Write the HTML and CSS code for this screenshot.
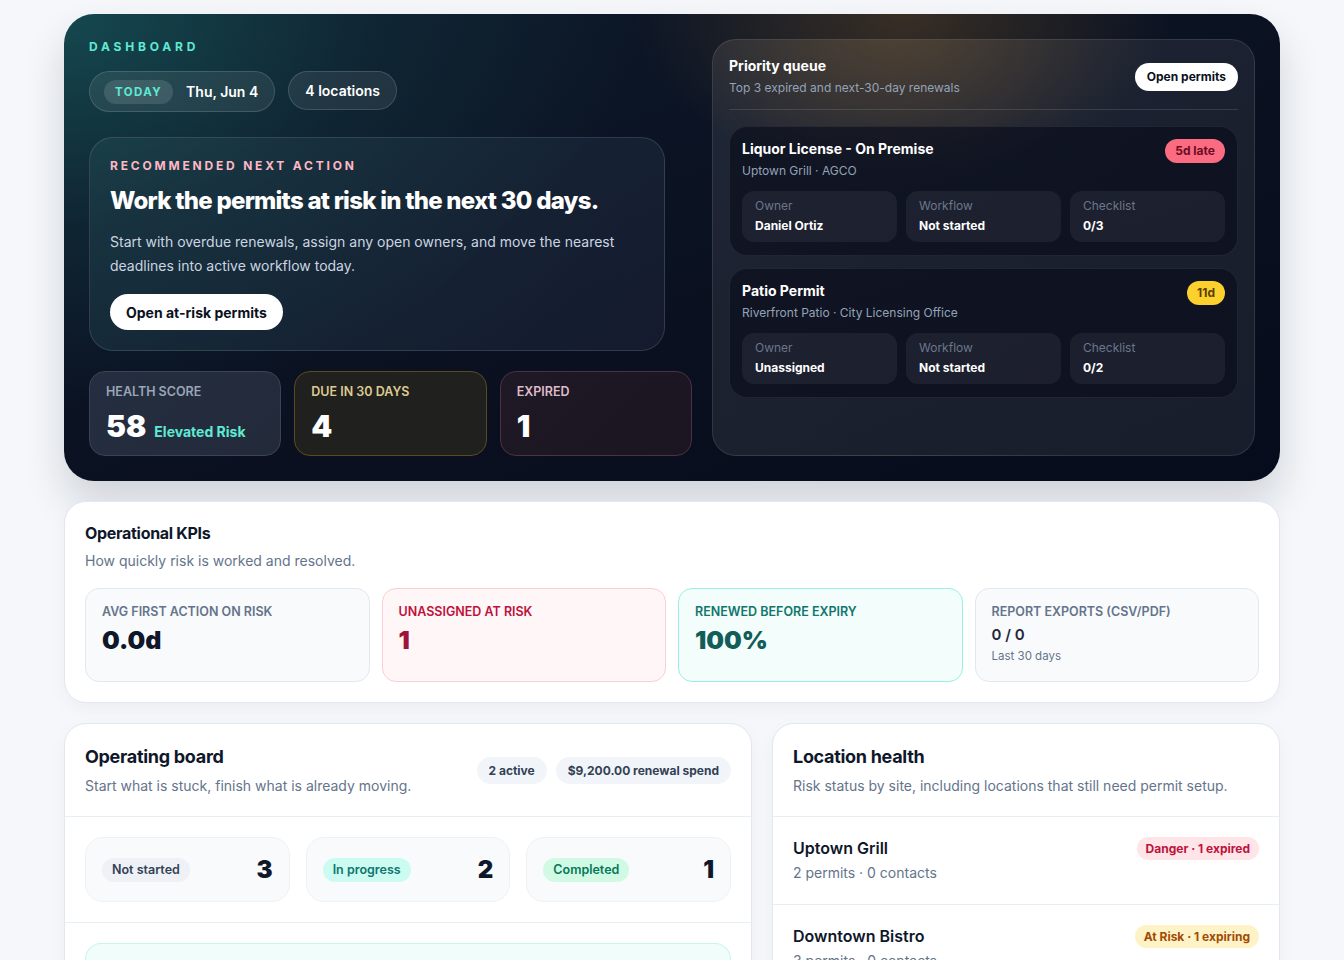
FILE: index.html
```html
<!DOCTYPE html>
<html lang="en">
<head>
    <meta charset="UTF-8">
    <meta name="viewport" content="width=device-width, initial-scale=1.0">
    <title>Permit Dashboard</title>
    <link rel="stylesheet" href="styles.css">
</head>
<body>
    <div class="page">

        <!-- Hero: summary + priority queue -->
        <section class="hero">
            <div class="hero-main">
                <div class="eyebrow">Dashboard</div>
                <div class="hero-pills">
                    <div class="pill pill-date"><span class="pill-tag">Today</span>Thu, Jun 4</div>
                    <div class="pill">4 locations</div>
                </div>

                <div class="next-action">
                    <div class="next-label">Recommended next action</div>
                    <h1>Work the permits at risk in the next 30 days.</h1>
                    <p>Start with overdue renewals, assign any open owners, and move the nearest deadlines into active workflow today.</p>
                    <button class="btn-light">Open at-risk permits</button>
                </div>

                <div class="stats">
                    <div class="stat stat-health">
                        <div class="stat-label">Health score</div>
                        <div class="stat-value">58 <span class="stat-note">Elevated Risk</span></div>
                    </div>
                    <div class="stat stat-due">
                        <div class="stat-label">Due in 30 days</div>
                        <div class="stat-value">4</div>
                    </div>
                    <div class="stat stat-expired">
                        <div class="stat-label">Expired</div>
                        <div class="stat-value">1</div>
                    </div>
                </div>
            </div>

            <div class="queue">
                <div class="queue-head">
                    <div>
                        <div class="queue-title">Priority queue</div>
                        <div class="queue-sub">Top 3 expired and next-30-day renewals</div>
                    </div>
                    <button class="btn-light btn-small">Open permits</button>
                </div>

                <div class="permit">
                    <div class="permit-top">
                        <div>
                            <div class="permit-name">Liquor License - On Premise</div>
                            <div class="permit-meta">Uptown Grill · AGCO</div>
                        </div>
                        <span class="due-badge late">5d late</span>
                    </div>
                    <div class="permit-fields">
                        <div class="field"><div class="field-label">Owner</div><div class="field-value">Daniel Ortiz</div></div>
                        <div class="field"><div class="field-label">Workflow</div><div class="field-value">Not started</div></div>
                        <div class="field"><div class="field-label">Checklist</div><div class="field-value">0/3</div></div>
                    </div>
                </div>

                <div class="permit">
                    <div class="permit-top">
                        <div>
                            <div class="permit-name">Patio Permit</div>
                            <div class="permit-meta">Riverfront Patio · City Licensing Office</div>
                        </div>
                        <span class="due-badge soon">11d</span>
                    </div>
                    <div class="permit-fields">
                        <div class="field"><div class="field-label">Owner</div><div class="field-value">Unassigned</div></div>
                        <div class="field"><div class="field-label">Workflow</div><div class="field-value">Not started</div></div>
                        <div class="field"><div class="field-label">Checklist</div><div class="field-value">0/2</div></div>
                    </div>
                </div>
            </div>
        </section>

        <!-- KPIs -->
        <section class="panel kpis">
            <h2>Operational KPIs</h2>
            <div class="panel-sub">How quickly risk is worked and resolved.</div>
            <div class="kpi-grid">
                <div class="kpi">
                    <div class="kpi-label">Avg first action on risk</div>
                    <div class="kpi-value">0.0d</div>
                </div>
                <div class="kpi kpi-danger">
                    <div class="kpi-label">Unassigned at risk</div>
                    <div class="kpi-value">1</div>
                </div>
                <div class="kpi kpi-good">
                    <div class="kpi-label">Renewed before expiry</div>
                    <div class="kpi-value">100%</div>
                </div>
                <div class="kpi">
                    <div class="kpi-label">Report exports (CSV/PDF)</div>
                    <div class="kpi-small">0 / 0</div>
                    <div class="kpi-foot">Last 30 days</div>
                </div>
            </div>
        </section>

        <div class="columns">
            <section class="panel board">
                <div class="panel-head">
                    <div>
                        <h2 class="h-lg">Operating board</h2>
                        <div class="panel-sub">Start what is stuck, finish what is already moving.</div>
                    </div>
                    <div class="chips">
                        <span class="chip">2 active</span>
                        <span class="chip">$9,200.00 renewal spend</span>
                    </div>
                </div>
                <div class="lanes">
                    <div class="lane"><span class="lane-tag">Not started</span><span class="lane-count">3</span></div>
                    <div class="lane"><span class="lane-tag tag-progress">In progress</span><span class="lane-count">2</span></div>
                    <div class="lane"><span class="lane-tag tag-done">Completed</span><span class="lane-count">1</span></div>
                </div>
                <div class="board-body">
                    <div class="board-note"></div>
                </div>
            </section>

            <section class="panel locations">
                <div class="panel-head">
                    <div>
                        <h2 class="h-lg">Location health</h2>
                        <div class="panel-sub">Risk status by site, including locations that still need permit setup.</div>
                    </div>
                </div>
                <div class="loc">
                    <div>
                        <div class="loc-name">Uptown Grill</div>
                        <div class="loc-meta">2 permits · 0 contacts</div>
                    </div>
                    <span class="loc-badge danger">Danger · 1 expired</span>
                </div>
                <div class="loc">
                    <div>
                        <div class="loc-name">Downtown Bistro</div>
                        <div class="loc-meta">3 permits · 0 contacts</div>
                    </div>
                    <span class="loc-badge warn">At Risk · 1 expiring</span>
                </div>
            </section>
        </div>
    </div>
</body>
</html>
```

FILE: styles.css
```css
* {
    box-sizing: border-box;
}
body {
    margin: 0;
    background: #f5f7fa;
    font-family: Inter, "Noto Sans", sans-serif;
    color: #0f172a;
}
.page {
    width: 1216px;
    margin: 0 auto;
    padding-top: 14px;
}
button {
    font-family: inherit;
    border: none;
    cursor: pointer;
}

/* Hero */
.hero {
    display: grid;
    grid-template-columns: 603px 1fr;
    gap: 20px;
    padding: 25px;
    border-radius: 30px;
    color: #fff;
    background:
        radial-gradient(ellipse 360px 220px at 69% 0%, rgba(128, 88, 36, 0.38), transparent 75%),
        radial-gradient(ellipse 760px 520px at 0% 0%, #15484f 0%, rgba(18, 52, 62, 0.5) 40%, transparent 75%),
        linear-gradient(160deg, #0e1a2b 0%, #0a1020 60%, #070c1c 100%);
    box-shadow: 0 22px 40px rgba(15, 23, 42, 0.16);
}
.eyebrow {
    font-size: 12px;
    line-height: 16px;
    font-weight: 700;
    letter-spacing: 3.8px;
    text-transform: uppercase;
    color: #5eead4;
}
.hero-pills {
    display: flex;
    gap: 13px;
    margin-top: 16px;
}
.pill {
    display: flex;
    align-items: center;
    height: 39px;
    padding: 0 16px;
    border-radius: 999px;
    background: rgba(255, 255, 255, 0.08);
    border: 1px solid rgba(255, 255, 255, 0.14);
    font-size: 14px;
    font-weight: 600;
}
.pill-date {
    height: 41px;
    padding-left: 14px;
    padding-right: 16px;
}
.pill-tag {
    margin-right: 13px;
    padding: 5px 11px;
    border-radius: 999px;
    background: rgba(255, 255, 255, 0.12);
    color: #5eead4;
    font-size: 11.5px;
    font-weight: 700;
    letter-spacing: 1.4px;
    text-transform: uppercase;
}
.next-action {
    width: 576px;
    margin-top: 25px;
    padding: 20px;
    border-radius: 24px;
    border: 1px solid rgba(255, 255, 255, 0.12);
    background: linear-gradient(135deg, rgba(40, 85, 92, 0.35), rgba(30, 36, 58, 0.55));
}
.next-label {
    font-size: 12px;
    line-height: 16px;
    font-weight: 700;
    letter-spacing: 2.8px;
    text-transform: uppercase;
    color: #fdb8c6;
}
.next-action h1 {
    margin: 11px 0 0;
    font-size: 24px;
    line-height: 32px;
    font-weight: 800;
    letter-spacing: -0.75px;
}
.next-action p {
    margin: 13px 0 0;
    font-size: 14px;
    line-height: 24px;
    color: #cbd5e1;
}
.btn-light {
    margin-top: 16px;
    height: 36px;
    padding: 0 16px;
    border-radius: 999px;
    background: #fff;
    color: #0b1020;
    font-size: 14px;
    font-weight: 700;
}
.btn-small {
    margin: 0;
    height: 28px;
    padding: 0 12px;
    font-size: 12px;
}
.stats {
    display: grid;
    grid-template-columns: repeat(3, 1fr);
    gap: 13px;
    margin-top: 20px;
}
.stat {
    height: 85px;
    padding: 12px 16px 0;
    border-radius: 16px;
    border: 1px solid;
}
.stat-label {
    font-size: 12.5px;
    line-height: 16px;
    font-weight: 600;
    text-transform: uppercase;
}
.stat-value {
    margin-top: 9px;
    font-size: 30px;
    line-height: 34px;
    font-weight: 900;
    display: flex;
    align-items: baseline;
    gap: 8px;
}
.stat-note {
    font-size: 14px;
    font-weight: 700;
    color: #5eead4;
}
.stat-health {
    background: linear-gradient(135deg, #252e40, #222a3a);
    border-color: #3b4457;
}
.stat-health .stat-label { color: #9aa5b8; }
.stat-due {
    background: #20201f;
    border-color: #5a4b1c;
}
.stat-due .stat-label { color: #dccb90; }
.stat-expired {
    background: linear-gradient(135deg, #1f1825, #1b1522);
    border-color: #4c3142;
}
.stat-expired .stat-label { color: #dcbccb; }

/* Priority queue */
.queue {
    padding: 16px;
    border-radius: 24px;
    border: 1px solid rgba(255, 255, 255, 0.1);
    background:
        radial-gradient(ellipse 280px 200px at 32% 0%, rgba(120, 90, 50, 0.22), transparent 75%),
        linear-gradient(90deg, rgba(255, 255, 255, 0.08), rgba(255, 255, 255, 0.07));
}
.queue-head {
    display: flex;
    justify-content: space-between;
    align-items: center;
    padding-bottom: 12px;
    border-bottom: 1px solid rgba(255, 255, 255, 0.12);
}
.queue-title {
    font-size: 14px;
    line-height: 20px;
    font-weight: 700;
}
.queue-sub {
    margin-top: 3px;
    font-size: 12px;
    line-height: 18px;
    color: #94a3b8;
}
.permit {
    margin-top: 16px;
    padding: 12px 12px 13px;
    border-radius: 18px;
    border: 1px solid rgba(255, 255, 255, 0.08);
    background: rgba(8, 12, 26, 0.62);
}
.permit + .permit {
    margin-top: 12px;
}
.permit-top {
    display: flex;
    justify-content: space-between;
    align-items: flex-start;
}
.permit-name {
    font-size: 14px;
    line-height: 20px;
    font-weight: 700;
}
.permit-meta {
    margin-top: 3px;
    font-size: 12px;
    line-height: 18px;
    color: #94a3b8;
}
.due-badge {
    height: 24px;
    line-height: 24px;
    padding: 0 10px;
    border-radius: 999px;
    font-size: 12px;
    font-weight: 700;
}
.due-badge.late {
    background: #fb6b82;
    color: #6b0d1f;
}
.due-badge.soon {
    background: #fcd02d;
    color: #5c3d00;
}
.permit-fields {
    display: grid;
    grid-template-columns: repeat(3, 1fr);
    gap: 9px;
    margin-top: 11px;
}
.field {
    padding: 6px 13px 7px;
    border-radius: 12px;
    background: rgba(255, 255, 255, 0.06);
}
.field-label {
    font-size: 12px;
    line-height: 18px;
    color: #6b778c;
}
.field-value {
    margin-top: 2px;
    font-size: 12px;
    line-height: 18px;
    font-weight: 700;
}

/* Light panels */
.panel {
    margin-top: 20px;
    background: #fff;
    border: 1px solid #e2e8f0;
    border-radius: 22px;
    box-shadow: 0 6px 18px rgba(15, 23, 42, 0.04);
}
.panel h2 {
    margin: 0;
    font-size: 16px;
    line-height: 22px;
    font-weight: 700;
    letter-spacing: -0.3px;
}
.panel h2.h-lg {
    font-size: 18px;
    line-height: 24px;
}
.panel-sub {
    margin-top: 7px;
    font-size: 14px;
    line-height: 20px;
    color: #64748b;
}
.kpis {
    padding: 20px;
}
.kpi-grid {
    display: grid;
    grid-template-columns: repeat(4, 1fr);
    gap: 12px;
    margin-top: 17px;
}
.kpi {
    height: 94px;
    padding: 15px 16px 0;
    border-radius: 14px;
    border: 1px solid #e2e8f0;
    background: #f8fafc;
}
.kpi-label {
    font-size: 12.5px;
    line-height: 16px;
    font-weight: 600;
    text-transform: uppercase;
    color: #64748b;
}
.kpi-value {
    margin-top: 5px;
    font-size: 25px;
    line-height: 30px;
    font-weight: 900;
    color: #0f172a;
}
.kpi-danger {
    background: #fff6f7;
    border-color: #fecdd3;
}
.kpi-danger .kpi-label { color: #be123c; }
.kpi-danger .kpi-value { color: #9f1239; }
.kpi-good {
    background: #f3fdfb;
    border-color: #99f0e0;
}
.kpi-good .kpi-label { color: #0f766e; }
.kpi-good .kpi-value { color: #115e59; }
.kpi-small {
    margin-top: 5px;
    font-size: 15px;
    line-height: 20px;
    font-weight: 600;
    color: #1e293b;
}
.kpi-foot {
    margin-top: 3px;
    font-size: 11.5px;
    line-height: 16px;
    color: #64748b;
}

/* Bottom columns */
.columns {
    display: grid;
    grid-template-columns: 688px 1fr;
    gap: 20px;
}
.columns .panel {
    border-bottom-left-radius: 0;
    border-bottom-right-radius: 0;
}
.panel-head {
    display: flex;
    justify-content: space-between;
    align-items: center;
    padding: 21px 20px 20px;
    border-bottom: 1px solid #e9eef4;
}
.chips {
    display: flex;
    gap: 9px;
}
.chip {
    height: 27px;
    line-height: 27px;
    padding: 0 12px;
    border-radius: 999px;
    background: #f1f5f9;
    color: #334155;
    font-size: 12px;
    font-weight: 700;
}
.lanes {
    display: grid;
    grid-template-columns: repeat(3, 1fr);
    gap: 16px;
    padding: 20px;
    border-bottom: 1px solid #e9eef4;
}
.lane {
    display: flex;
    justify-content: space-between;
    align-items: center;
    height: 65px;
    padding: 0 16px;
    border-radius: 18px;
    border: 1px solid #eef2f6;
    background: #f8fafc;
}
.lane-tag {
    height: 24px;
    line-height: 24px;
    padding: 0 10px;
    border-radius: 999px;
    background: #eef2f7;
    color: #334155;
    font-size: 12.5px;
    font-weight: 600;
}
.tag-progress {
    background: #ccfbf1;
    color: #0f766e;
}
.tag-done {
    background: #d1fae5;
    color: #047857;
}
.lane-count {
    font-size: 24px;
    font-weight: 900;
    color: #0f172a;
}
.board-body {
    padding: 20px 20px 0;
}
.board-note {
    height: 40px;
    border: 1px solid #c9f5ea;
    border-bottom: none;
    border-radius: 16px 16px 0 0;
    background: #f0fdfa;
}
.loc {
    display: flex;
    justify-content: space-between;
    align-items: flex-start;
    padding: 20px 20px 21px;
    border-bottom: 1px solid #e9eef4;
}
.loc-name {
    font-size: 16px;
    line-height: 22px;
    font-weight: 600;
}
.loc-meta {
    margin-top: 4px;
    font-size: 14px;
    line-height: 20px;
    color: #64748b;
}
.loc-badge {
    height: 23px;
    line-height: 23px;
    padding: 0 9px;
    border-radius: 999px;
    font-size: 12px;
    font-weight: 700;
}
.loc-badge.danger {
    background: #ffe4e8;
    color: #be123c;
}
.loc-badge.warn {
    background: #fef3c7;
    color: #a14a05;
}
```
